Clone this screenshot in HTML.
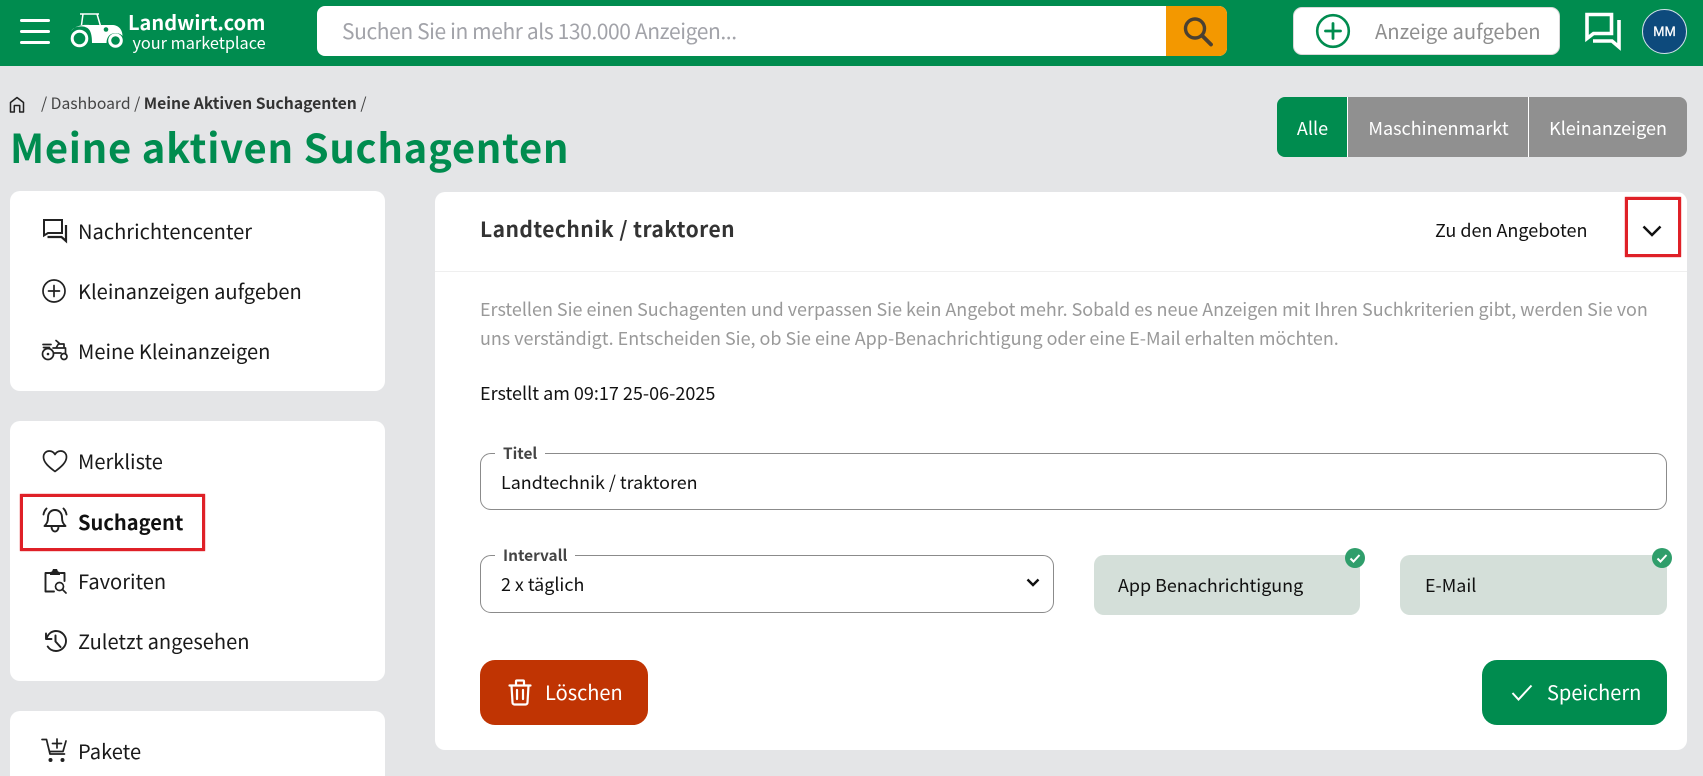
<!DOCTYPE html>
<html lang="de">
<head>
<meta charset="utf-8">
<title>Meine aktiven Suchagenten</title>
<style>
html,body{margin:0;padding:0;width:1703px;height:776px;overflow:hidden}
body{position:relative;background:#e4e5e7;font-family:"Noto Sans CJK JP","Liberation Sans",sans-serif;color:#111}
.a{position:absolute;box-sizing:border-box}
.t{position:absolute;white-space:nowrap;line-height:30px;height:30px;margin-top:-15px}
.nav{font-size:20.1px;color:#1a1a1a;left:78px}
svg{position:absolute;overflow:visible}
.i{fill:none;stroke:#222;stroke-width:1.7;stroke-linecap:round;stroke-linejoin:round}
.card{background:#fff;border-radius:10px}
.field{border:1px solid #8b8b8b;border-radius:11px;background:#fff}
.leg{position:absolute;background:#fff;padding:0 8px;font-size:15.4px;font-weight:700;color:#444;line-height:20px;height:20px;white-space:nowrap}
.red{border:3px solid #df2027;box-shadow:0 0 1px #df2027}
</style>
</head>
<body>
<div class="a" style="left:0;top:0;width:1703px;height:66px;background:#008c4f"></div>
<div class="a" style="left:20px;top:19px;width:30px;height:3px;background:#fff;border-radius:2px"></div>
<div class="a" style="left:20px;top:30px;width:30px;height:3px;background:#fff;border-radius:2px"></div>
<div class="a" style="left:20px;top:41px;width:30px;height:3px;background:#fff;border-radius:2px"></div>

<svg style="left:70px;top:12px" width="56" height="40" viewBox="0 0 56 40">
  <circle cx="9.500" cy="26.500" r="7.300" fill="none" stroke="#fff" stroke-width="3"/>
  <circle cx="45.500" cy="28.500" r="5.800" fill="none" stroke="#fff" stroke-width="3"/>
  <path d="M11 2h16l3.500 12M13 2l-1.500 11M10 2h19" fill="none" stroke="#fff" stroke-width="1.500"/>
  <path d="M1 19C4 14 13 13 17.500 16 21 18.500 22 24 22 31H36.500C36.500 25 40 21 45.500 21 48 21 51 22 52.500 24 52.500 17 48 13 42 13H20C14 12.500 6 13 1 19Z" fill="#fff"/>
  <circle cx="36" cy="17.500" r="2.300" fill="#008c4f"/>
</svg>
<div class="t" style="left:128px;top:22px;font-size:20px;font-weight:700;color:#fff">Landwirt.com</div>
<div class="t" style="left:132.500px;top:42px;font-size:16.300px;color:#fff">your marketplace</div>

<div class="a" style="left:317px;top:6px;width:910px;height:50px;background:#fff;border-radius:8px;overflow:hidden"><div class="a" style="left:849px;top:0;width:61px;height:50px;background:#f39800"></div></div>
<div class="t" style="left:342px;top:31px;font-size:21px;color:#a2a3a9;letter-spacing:-.4px">Suchen Sie in mehr als 130.000 Anzeigen...</div>
<svg style="left:1181px;top:16px" width="34" height="32" viewBox="0 0 34 32"><circle cx="14" cy="12.500" r="9.500" fill="none" stroke="#4a4032" stroke-width="3.400"/><path d="M21 19.500l9 9" stroke="#4a4032" stroke-width="3.800" stroke-linecap="round"/></svg>

<div class="a" style="left:1293px;top:7px;width:267px;height:48px;background:#fff;border-radius:9px;border:1px solid #d8d8d8"></div>
<svg style="left:1315px;top:13px" width="36" height="36" viewBox="0 0 36 36"><circle cx="18" cy="18" r="15.800" fill="none" stroke="#008c4f" stroke-width="2.600"/><path d="M18 10.500v15M10.500 18h15" stroke="#008c4f" stroke-width="2.800" stroke-linecap="round"/></svg>
<div class="t" style="left:1375px;top:31px;font-size:20.200px;color:#8f8f8f">Anzeige aufgeben</div>

<svg style="left:1584px;top:12px" width="38" height="38" viewBox="0 0 38 38"><path d="M3 2.500h24.500v19H9.500L3 26.500z" fill="none" stroke="#fff" stroke-width="3.600" stroke-linejoin="miter"/><path d="M35 8v27l-7-6H9" fill="none" stroke="#fff" stroke-width="3.600"/></svg>
<div class="a" style="left:1642px;top:9px;width:45px;height:45px;border-radius:50%;background:#0d4a7c;border:1px solid #cfe0e8;color:#fff;font:400 13.500px/43px 'Liberation Sans',sans-serif;text-align:center;-webkit-text-stroke:.3px #fff">MM</div>

<svg style="left:9px;top:96px" width="16" height="17" viewBox="0 0 16 17"><path d="M1.500 16V6.500L8 1.500l6.500 5V16h-3.800V9.500H5.300V16z" fill="none" stroke="#222" stroke-width="1.500" stroke-linejoin="round"/></svg>
<div class="t" style="left:41px;top:103px;font-size:15.700px;color:#444">/ Dashboard / <b style="color:#333;font-weight:700">Meine Aktiven Suchagenten</b> /</div>
<div class="t" style="left:10px;top:146px;font-size:40px;font-weight:700;color:#008c4f;line-height:50px;height:50px;margin-top:-25px;letter-spacing:.72px">Meine aktiven Suchagenten</div>

<div class="a" style="left:1277px;top:97px;width:71px;height:60px;background:#008c4f;border-radius:8px 0 0 8px;border-right:1px solid #fff"></div>
<div class="a" style="left:1348px;top:97px;width:181px;height:60px;background:#909090;border-right:1px solid #fff"></div>
<div class="a" style="left:1529px;top:97px;width:158px;height:60px;background:#909090;border-radius:0 8px 8px 0"></div>
<div class="t" style="left:1277px;width:71px;text-align:center;top:128px;font-size:18px;color:#fff">Alle</div>
<div class="t" style="left:1348px;width:181px;text-align:center;top:128px;font-size:18px;color:#fff">Maschinenmarkt</div>
<div class="t" style="left:1529px;width:158px;text-align:center;top:128px;font-size:18px;color:#fff">Kleinanzeigen</div>

<!-- Sidebar -->
<div class="a card" style="left:10px;top:191px;width:375px;height:200px"></div>
<div class="a card" style="left:10px;top:421px;width:375px;height:260px"></div>
<div class="a" style="left:10px;top:711px;width:375px;height:65px;background:#fff;border-radius:10px 10px 0 0"></div>

<svg style="left:42px;top:218px" width="26" height="24" viewBox="0 0 26 24"><path class="i" style="stroke-width:2;stroke-linecap:butt;stroke-linejoin:miter" d="M2 2h18v13H6l-4 2.500z"/><path class="i" style="stroke-width:2.200;stroke-linecap:butt;stroke-linejoin:miter" d="M24 7v16l-4.500-4H5.500"/></svg>
<div class="t nav" style="top:231px">Nachrichtencenter</div>

<svg style="left:42px;top:279px" width="24" height="24" viewBox="0 0 24 24"><circle class="i" cx="12" cy="12" r="11"/><path class="i" d="M12 6.500v11M6.500 12h11"/></svg>
<div class="t nav" style="top:291px">Kleinanzeigen aufgeben</div>

<svg style="left:41px;top:338px" width="28" height="24" viewBox="0 0 28 24"><circle class="i" cx="7" cy="16" r="5.500"/><circle cx="7" cy="16" r="1.300" fill="#222"/><circle class="i" cx="23" cy="18.500" r="3"/><path class="i" d="M2 6.500h8M2.500 9.500h6M12.500 15H20M12 10h12.500V16M15 10l3-5-3-2.500M23 10l0-4h-5"/></svg>
<div class="t nav" style="top:351px">Meine Kleinanzeigen</div>

<svg style="left:42px;top:449px" width="26" height="24" viewBox="0 0 26 24"><path class="i" d="M13 22.500C7 18 1.500 13.500 1.500 8 1.500 4.500 4 2 7.200 2 9.500 2 11.800 3.300 13 5.500 14.200 3.300 16.500 2 18.800 2 22 2 24.500 4.500 24.500 8 24.500 13.500 19 18 13 22.500z"/></svg>
<div class="t nav" style="top:461px">Merkliste</div>

<div class="a red" style="left:20px;top:494px;width:185px;height:57px"></div>
<svg style="left:42px;top:507px" width="26" height="27" viewBox="0 0 26 27"><path class="i" style="stroke-width:1.900" d="M13 3c-4.500 0-7 3.500-7 7.500 0 4-1 6-3.500 8.500h21c-2.500-2.500-3.500-4.500-3.500-8.500C20 6.500 17.500 3 13 3zM9.500 19.500c0 3 1.500 5 3.500 5s3.500-2 3.500-5M4.500 1.500C3 3 2 5 1.500 7.500M21.500 1.500C23 3 24 5 24.500 7.500"/></svg>
<div class="t nav" style="top:522px;font-weight:700;color:#111">Suchagent</div>

<svg style="left:43px;top:568px" width="26" height="27" viewBox="0 0 26 27"><path class="i" d="M7 5H2.500v18.500H11M17.500 5H21.500v8" style="stroke-width:1.900"/><path d="M7 5c0-1 1-1.500 2-1.500L10 1h4l1 2.500c1 0 2 .5 2 1.500v2H7z" fill="#222"/><circle class="i" cx="16.500" cy="18.500" r="4"/><path class="i" d="M19.500 21.500l3.500 3.500"/></svg>
<div class="t nav" style="top:581px">Favoriten</div>

<svg style="left:43px;top:629px" width="25" height="24" viewBox="0 0 25 24"><path class="i" d="M3 4.500V10h5.500M3.500 9.500C5 5 8.500 2 13 2c5.500 0 10 4.500 10 10s-4.500 10-10 10c-3.500 0-6.500-1.700-8.300-4.500" style="stroke-width:1.900"/><path class="i" d="M12.500 6.500V12.500l5 5.500" style="stroke-width:2"/></svg>
<div class="t nav" style="top:641px">Zuletzt angesehen</div>

<svg style="left:41px;top:737px" width="27" height="27" viewBox="0 0 27 27"><path class="i" d="M1 2.500h4.500L9 17h14.500M6.500 7l2 7.500H22L25 4" /><path class="i" d="M16 2v9M11.500 6.500h9"/><circle cx="9.500" cy="23" r="2" fill="#222"/><circle cx="21.500" cy="23" r="2" fill="#222"/></svg>
<div class="t nav" style="top:751px">Pakete</div>

<!-- Main card -->
<div class="a card" style="left:435px;top:192px;width:1252px;height:558px"></div>
<div class="a" style="left:435px;top:271px;width:1252px;height:1px;background:#efefef"></div>
<div class="t" style="left:480px;top:229px;font-size:21px;font-weight:700;color:#333;letter-spacing:.45px">Landtechnik / traktoren</div>
<div class="t" style="left:1435px;top:230px;font-size:18px;color:#111">Zu den Angeboten</div>
<div class="a red" style="left:1625px;top:197px;width:56px;height:60px"></div>
<svg style="left:1642px;top:225px" width="20" height="12" viewBox="0 0 20 12"><path d="M1.500 1.500L10 10l8.500-8.500" fill="none" stroke="#111" stroke-width="2.500"/></svg>

<div class="t" style="left:480px;top:308.500px;font-size:17.930px;color:#999">Erstellen Sie einen Suchagenten und verpassen Sie kein Angebot mehr. Sobald es neue Anzeigen mit Ihren Suchkriterien gibt, werden Sie von</div>
<div class="t" style="left:480px;top:338px;font-size:17.930px;color:#999">uns verständigt. Entscheiden Sie, ob Sie eine App-Benachrichtigung oder eine E-Mail erhalten möchten.</div>
<div class="t" style="left:480px;top:393px;font-size:18px;color:#111">Erstellt am 09:17 25-06-2025</div>

<div class="a field" style="left:480px;top:453px;width:1187px;height:57px"></div>
<div class="leg" style="left:495px;top:443px">Titel</div>
<div class="t" style="left:501px;top:482px;font-size:17.900px;color:#111">Landtechnik / traktoren</div>

<div class="a field" style="left:480px;top:555px;width:574px;height:58px"></div>
<div class="leg" style="left:495px;top:545px">Intervall</div>
<div class="t" style="left:501px;top:584px;font-size:17.900px;color:#111">2 x täglich</div>
<svg style="left:1026px;top:578px" width="14" height="9" viewBox="0 0 14 9"><path d="M1.500 1.500L7 7l5.500-5.500" fill="none" stroke="#111" stroke-width="2.400"/></svg>

<div class="a" style="left:1094px;top:555px;width:266px;height:60px;background:#d4dfd9;border-radius:10px"></div>
<div class="a" style="left:1400px;top:555px;width:267px;height:60px;background:#d4dfd9;border-radius:10px"></div>
<div class="t" style="left:1118px;top:585px;font-size:17.900px;color:#111">App Benachrichtigung</div>
<div class="t" style="left:1425px;top:585px;font-size:17.900px;color:#111">E-Mail</div>
<svg style="left:1345px;top:547px" width="20" height="22" viewBox="0 0 20 20"><circle cx="10" cy="10" r="10" fill="#2f9e6b"/><path d="M5.500 10.500l3 3 6-6.500" fill="none" stroke="#fff" stroke-width="2"/></svg>
<svg style="left:1652px;top:547px" width="20" height="22" viewBox="0 0 20 20"><circle cx="10" cy="10" r="10" fill="#2f9e6b"/><path d="M5.500 10.500l3 3 6-6.500" fill="none" stroke="#fff" stroke-width="2"/></svg>

<div class="a" style="left:480px;top:660px;width:168px;height:65px;background:#c03403;border-radius:15px"></div>
<svg style="left:508px;top:679px" width="24" height="27" viewBox="0 0 24 27"><path d="M1.500 6.500h21M8 6V2.500c0-.7.5-1 1-1h6c.5 0 1 .3 1 1V6M3.500 6.500l1 17c0 1.300 1 2 2 2h11c1 0 2-.7 2-2l1-17M9 11v9M15 11v9" fill="none" stroke="#fff" stroke-width="2.200" stroke-linecap="round" stroke-linejoin="round"/></svg>
<div class="t" style="left:545px;top:691.500px;font-size:20px;color:#fff">Löschen</div>

<div class="a" style="left:1482px;top:660px;width:185px;height:65px;background:#008c4f;border-radius:15px"></div>
<svg style="left:1511px;top:684px" width="22" height="17" viewBox="0 0 22 17"><path d="M1.500 9l6 6.500L20.500 1.500" fill="none" stroke="#fff" stroke-width="2"/></svg>
<div class="t" style="left:1547px;top:691.500px;font-size:20px;color:#fff">Speichern</div>
</body>
</html>
